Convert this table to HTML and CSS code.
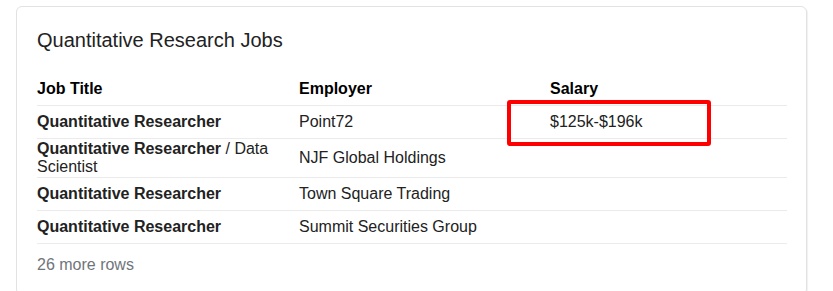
FILE: index.html
```html
<!DOCTYPE html>
<html>
<head>
<meta charset="utf-8">
<link rel="stylesheet" href="styles.css">
</head>
<body>
<div class="card">
  <h2 class="title">Quantitative Research Jobs</h2>
  <table class="jobs">
    <colgroup>
      <col class="c-title">
      <col class="c-emp">
      <col class="c-sal">
    </colgroup>
    <thead>
      <tr><th>Job Title</th><th>Employer</th><th>Salary</th></tr>
    </thead>
    <tbody>
      <tr><td><b>Quantitative Researcher</b></td><td>Point72</td><td>$125k-$196k</td></tr>
      <tr><td><b>Quantitative Researcher</b> / Data Scientist</td><td>NJF Global Holdings</td><td></td></tr>
      <tr><td><b>Quantitative Researcher</b></td><td>Town Square Trading</td><td></td></tr>
      <tr><td><b>Quantitative Researcher</b></td><td>Summit Securities Group</td><td></td></tr>
    </tbody>
  </table>
  <div class="more">26 more rows</div>
  <div class="highlight"></div>
</div>
</body>
</html>
```

FILE: styles.css
```css
html, body {
  margin: 0;
  padding: 0;
  background: #fff;
  overflow: hidden;
}
body {
  font-family: "Liberation Sans", Arial, sans-serif;
  color: #222;
}
.card {
  position: relative;
  margin: 6px 0 0 16px;
  border: 1px solid #e2e2e2;
  border-radius: 6px;
  box-shadow: 1px 1px 1px rgba(0,0,0,0.06);
  padding: 21px 19px 20px 20px;
  box-sizing: content-box;
  width: 750px;
}
.title {
  margin: 0 0 21px 0;
  font-size: 20px;
  line-height: 24px;
  font-weight: normal;
  color: #222;
}
.jobs {
  width: 750px;
  table-layout: fixed;
  border-collapse: collapse;
  font-size: 16px;
  line-height: 18px;
}
.c-title { width: 262px; }
.c-emp { width: 251px; }
.c-sal { width: 237px; }
.jobs th, .jobs td {
  text-align: left;
  vertical-align: middle;
  padding: 1px 0;
  height: 30px;
  border-bottom: 1px solid #ebebeb;
  color: #222;
}
.jobs th {
  font-weight: bold;
  color: #000;
}
.jobs td b {
  font-weight: bold;
}
.more {
  margin-top: 12px;
  font-size: 16px;
  line-height: 18px;
  color: #70757a;
}
.highlight {
  position: absolute;
  left: 490px;
  top: 93px;
  width: 204px;
  height: 46px;
  box-sizing: border-box;
  border: 4px solid #ff0000;
  border-radius: 3px;
}
```
